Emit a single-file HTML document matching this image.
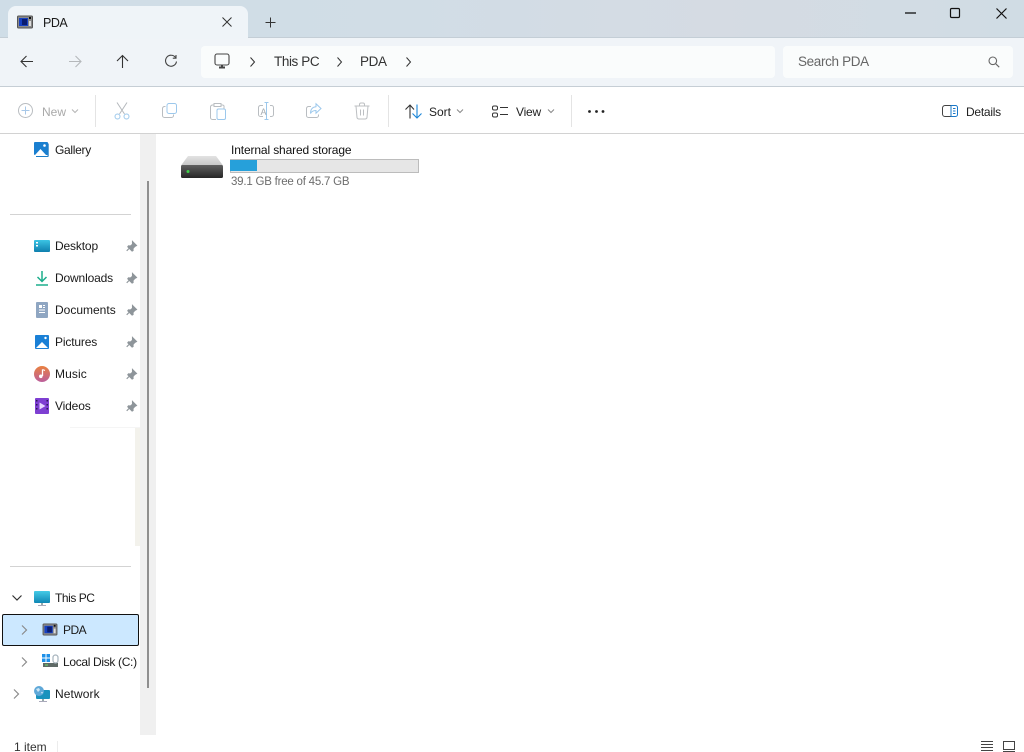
<!DOCTYPE html>
<html><head><meta charset="utf-8"><style>
html,body{margin:0;padding:0;width:1024px;height:752px;overflow:hidden;background:#fff}
body{position:relative;font-family:"Liberation Sans",sans-serif;font-size:12px;color:#1a1a1a}
.a{position:absolute}
.t{position:absolute;white-space:nowrap;line-height:16px}
.n{letter-spacing:-.15px}
.ad{font-size:13.5px;letter-spacing:-.4px;color:#333}
svg{position:absolute;overflow:visible}
</style></head><body>
<div class="a" style="left:0;top:0;width:1024px;height:38px;background:linear-gradient(90deg,#cfdde7 0%,#d1dde6 40%,#d5dbe3 70%,#d0dce4 100%)"></div>
<div class="a" style="left:0;top:38px;width:1024px;height:48px;background:#f0f4f8"></div>
<div class="a" style="left:0;top:37px;width:1024px;height:1px;background:#c4ced6"></div>
<div class="a" style="left:0;top:86px;width:1024px;height:1px;background:#c6ced5"></div>
<div class="a" style="left:8px;top:6px;width:240px;height:33px;background:#eff4f8;border-radius:8px 8px 0 0"></div>
<div class="a" style="left:201px;top:46px;width:574px;height:32px;background:#fafcfc;border-radius:4px"></div>
<div class="a" style="left:783px;top:46px;width:230px;height:32px;background:#fafcfc;border-radius:4px"></div>
<div class="a" style="left:0;top:133px;width:1024px;height:1px;background:#d2d2d2"></div>
<div class="a" style="left:140px;top:134px;width:16px;height:601px;background:#f0f0f0"></div>
<div class="a" style="left:135px;top:428px;width:5px;height:118px;background:#f3f2ec"></div>
<div class="a" style="left:70px;top:427px;width:70px;height:1px;background:#f5f5f5"></div>
<div class="a" style="left:147px;top:181px;width:2px;height:507px;background:#8f8f8f"></div>
<div class="a" style="left:10px;top:214px;width:121px;height:1px;background:#d3d3d3"></div>
<div class="a" style="left:10px;top:566px;width:121px;height:1px;background:#d3d3d3"></div>
<div class="a" style="left:2px;top:614px;width:135px;height:30px;background:#cce8ff;border:1.5px solid #111;border-radius:2px"></div>
<div class="a" style="left:57px;top:741px;width:1px;height:11px;background:#ececec"></div>

<!-- tab -->
<svg style="left:17px;top:15px" width="16" height="14" viewBox="0 0 16 14"><rect x=".5" y="1" width="15" height="12" rx="1" fill="#8b8b8b" stroke="#555"/><rect x="2" y="3" width="9" height="8" fill="#1740c0"/><rect x="5" y="4" width="5" height="6" fill="#0a1c70"/><rect x="12" y="2" width="2" height="2" fill="#111"/><rect x="12" y="6" width="2" height="5" fill="#ddd"/></svg>
<div class="t" style="left:43px;top:15px;font-size:12.5px;letter-spacing:-.5px">PDA</div>
<svg style="left:221px;top:16px" width="12" height="12" fill="none" stroke="#333"><path d="M1.500 1.500l9 9M10.500 1.500l-9 9"/></svg>
<svg style="left:265px;top:17px" width="11" height="11" fill="none" stroke="#333"><path d="M5.500 .5v10M.5 5.500h10"/></svg>
<!-- window -->
<svg style="left:905px;top:12px" width="12" height="3" fill="none" stroke="#111" stroke-width="1.300"><path d="M0 1h11"/></svg>
<svg style="left:950px;top:8px" width="11" height="11" fill="none" stroke="#111" stroke-width="1.200"><rect x=".5" y=".5" width="9" height="9" rx="1.200"/></svg>
<svg style="left:995.500px;top:8px" width="12" height="12" fill="none" stroke="#111" stroke-width="1.200"><path d="M.5 .5l10 10M10.500 .5l-10 10"/></svg>
<!-- nav -->
<svg style="left:20px;top:54px" width="14" height="14" fill="none" stroke="#333" stroke-width="1.100"><path d="M1 7.500h12M6.500 2l-5.500 5.500 5.500 5.500"/></svg>
<svg style="left:68px;top:54px" width="14" height="14" fill="none" stroke="#b5b8bb" stroke-width="1.100"><path d="M1 7.500h12M7.500 2l5.500 5.500-5.500 5.500"/></svg>
<svg style="left:116px;top:54px" width="14" height="14" fill="none" stroke="#333" stroke-width="1.100"><path d="M6.500 14V1.500M1 7l5.500-5.500L12 7"/></svg>
<svg style="left:164px;top:54px" width="14" height="14" fill="none" stroke="#444" stroke-width="1.100"><path d="M11.500 3.500A5.500 5.500 0 1 0 12.500 7.500M12 1v3.200H8.800"/></svg>
<svg style="left:214px;top:53px" width="18" height="17" fill="none" stroke="#444" stroke-width="1.100"><rect x="1" y="1" width="14" height="11" rx="2"/><path d="M5 14.500h6M8 12v2" stroke-width="2"/></svg>
<svg style="left:249px;top:57px" width="8" height="10" fill="none" stroke="#333"><path d="M1.500 .5l4 4.500-4 4.500"/></svg>
<div class="t ad" style="left:274px;top:54px">This PC</div>
<svg style="left:336px;top:57px" width="8" height="10" fill="none" stroke="#333"><path d="M1.500 .5l4 4.500-4 4.500"/></svg>
<div class="t ad" style="left:360px;top:54px">PDA</div>
<svg style="left:405px;top:57px" width="8" height="10" fill="none" stroke="#333"><path d="M1.500 .5l4 4.500-4 4.500"/></svg>
<div class="t" style="left:798px;top:54px;font-size:13.5px;letter-spacing:-.35px;color:#666">Search PDA</div>
<svg style="left:988px;top:56px" width="12" height="12" fill="none" stroke="#666" stroke-width="1.100"><circle cx="4.800" cy="4.800" r="3.800"/><path d="M7.800 7.800l3.400 3.400"/></svg>
<!-- toolbar -->
<svg style="left:18px;top:103px" width="16" height="16" fill="none" stroke="#b9bdc1"><circle cx="7.500" cy="7.500" r="7"/><path d="M7.500 3.500v8M3.500 7.500h8" stroke="#a8c8e8"/></svg>
<div class="t" style="left:42px;top:104px;color:#a9a9a9">New</div>
<svg style="left:71px;top:109px" width="8" height="5" fill="none" stroke="#b5b5b5"><path d="M1 .5l3 3 3-3"/></svg>
<div class="a" style="left:95px;top:95px;width:1px;height:32px;background:#e4e4e4"></div>
<svg style="left:114px;top:102px" width="16" height="18" fill="none" stroke="#b4b8bc"><path d="M3 .5l7.500 11.500M13 .5L5.500 12"/><circle cx="3.500" cy="14.500" r="2.500" stroke="#9cc8ec"/><circle cx="12.500" cy="14.500" r="2.500" stroke="#9cc8ec"/></svg>
<svg style="left:162px;top:103px" width="16" height="16" fill="none"><path d="M3.500 3.500h-1a2 2 0 0 0-2 2v7a2 2 0 0 0 2 2h7a2 2 0 0 0 2-2v-1" stroke="#b9bdc1"/><rect x="5" y=".5" width="9.500" height="10" rx="2" stroke="#9cc8ec"/></svg>
<svg style="left:210px;top:102px" width="17" height="18" fill="none"><path d="M4 3H2.500a2 2 0 0 0-2 2v10.500a2 2 0 0 0 2 2H6M11 3h1.500a1.500 1.500 0 0 1 1.500 2v1.500M4 1.500h7v3H4z" stroke="#b9bdc1"/><rect x="7" y="7" width="8.500" height="10.500" rx="1.500" stroke="#9cc8ec"/></svg>
<svg style="left:258px;top:102px" width="16" height="18" fill="none"><path d="M5 3.500H2.500a2 2 0 0 0-2 2v7a2 2 0 0 0 2 2H5M12 3.500h1.500a2 2 0 0 1 2 2v7a2 2 0 0 1-2 2H12" stroke="#b9bdc1"/><path d="M8.500 .5v17M6.500 .5h4M6.500 17.500h4" stroke="#9cc8ec"/><text x="2.500" y="13" font-family="Liberation Sans,sans-serif" font-size="9" fill="#a5abb0">A</text></svg>
<svg style="left:306px;top:103px" width="16" height="16" fill="none"><path d="M5 3.500H2.500a2 2 0 0 0-2 2v7a2 2 0 0 0 2 2h8a2 2 0 0 0 2-2v-1" stroke="#b9bdc1"/><path d="M10 .8l5 4.700-5 4.700V7.500c-3 0-4.500 1-5.500 3 0-4 2-6.500 5.500-6.800z" stroke="#9cc8ec"/></svg>
<svg style="left:354px;top:102px" width="16" height="18" fill="none" stroke="#bcbfc2"><path d="M.5 4h15M5.500 4V2.500a1.500 1.500 0 0 1 1.500-1.500h2a1.500 1.500 0 0 1 1.500 1.500V4M2 4l1 11.500a2 2 0 0 0 2 1.500h6a2 2 0 0 0 2-1.500L14 4M6.500 7.500v6M9.500 7.500v6"/></svg>
<div class="a" style="left:388px;top:95px;width:1px;height:32px;background:#e4e4e4"></div>
<svg style="left:405px;top:104px" width="17" height="15" fill="none" stroke-width="1.100"><path d="M5 14.500V1M.5 5.500L5 1l4 4.500" stroke="#333"/><path d="M12 .5V14M7.500 9.500L12 14l4.500-4.500" stroke="#1a86d8"/></svg>
<div class="t" style="left:429px;top:104px;color:#222">Sort</div>
<svg style="left:456px;top:109px" width="8" height="5" fill="none" stroke="#888"><path d="M1 .5l3 3 3-3"/></svg>
<svg style="left:492px;top:105px" width="18" height="13" fill="none" stroke="#333"><rect x=".5" y="1" width="5" height="4" rx="1.500"/><rect x=".5" y="8" width="5" height="4" rx="1.500"/><path d="M8 2.500h8M8 9.500h8"/></svg>
<div class="t" style="left:516px;top:104px;color:#222;letter-spacing:-.2px">View</div>
<svg style="left:547px;top:109px" width="8" height="5" fill="none" stroke="#888"><path d="M1 .5l3 3 3-3"/></svg>
<div class="a" style="left:571px;top:95px;width:1px;height:32px;background:#e4e4e4"></div>
<svg style="left:588px;top:110px" width="17" height="3" fill="#222"><circle cx="1.500" cy="1.500" r="1.400"/><circle cx="8.500" cy="1.500" r="1.400"/><circle cx="15" cy="1.500" r="1.400"/></svg>
<svg style="left:942px;top:105px" width="17" height="13" fill="none"><path d="M9 .5H3a2.500 2.500 0 0 0-2.500 2.500v6A2.500 2.500 0 0 0 3 11.500h6z" stroke="#444"/><path d="M9 .5h4.500a2 2 0 0 1 2 2v7a2 2 0 0 1-2 2H9zM11 3.500h2.500M11 6h2.500M11 8.500h2.500" stroke="#1a78c8"/></svg>
<div class="t" style="left:966px;top:104px;color:#222;letter-spacing:-.25px">Details</div>

<!-- sidebar -->
<svg style="left:34px;top:142px" width="16" height="16"><rect width="14" height="13" rx="1" fill="#1a7fd0"/><path d="M14.700 1.500v12.500a1 1 0 0 1-1 1H2v-1h11.500V1.500z" fill="#1c7cc6"/><path d="M1 13l5.500-6 5.500 6z" fill="#fff"/><circle cx="10.500" cy="3.500" r="1.300" fill="#fff"/></svg>
<div class="t" style="left:55px;top:142px;letter-spacing:-.3px">Gallery</div>
<svg style="left:34px;top:240px" width="16" height="12"><rect width="16" height="12" rx="1" fill="url(#dk)"/><defs><linearGradient id="dk" x1="0" y1="0" x2="0" y2="1"><stop offset="0" stop-color="#3cc4e4"/><stop offset="1" stop-color="#0e7fae"/></linearGradient></defs><rect x="2" y="2" width="2" height="1.500" fill="#fff"/><rect x="2" y="5" width="2" height="1.500" fill="#fff"/></svg>
<div class="t n" style="left:55px;top:238px">Desktop</div>
<svg style="left:36px;top:271px" width="12" height="15" fill="none" stroke="#1cae8c" stroke-width="1.500"><path d="M6 0v10M1.500 6L6 10.500 10.500 6"/><path d="M0 14h12"/></svg>
<div class="t n" style="left:55px;top:270px">Downloads</div>
<svg style="left:36px;top:302px" width="12" height="16"><rect width="12" height="16" rx="1" fill="#8fa6c2"/><path d="M3 3h3v3H3zM7 3h2v1H7zM7 5h2v1H7zM3 7.500h6v1H3zM3 10h6v1H3z" fill="#fff"/></svg>
<div class="t" style="left:55px;top:302px">Documents</div>
<svg style="left:35px;top:335px" width="14" height="14"><rect width="14" height="14" rx="1" fill="#1a80d6"/><path d="M1 13l6-6 6 6z" fill="#fff"/><circle cx="10.500" cy="3" r="1.200" fill="#fff"/></svg>
<div class="t n" style="left:55px;top:334px">Pictures</div>
<svg style="left:34px;top:366px" width="16" height="16"><defs><linearGradient id="mu" x1="0" y1="0" x2="0" y2="1"><stop offset="0" stop-color="#e9803f"/><stop offset="1" stop-color="#bb5f9c"/></linearGradient></defs><circle cx="8" cy="8" r="8" fill="url(#mu)"/><path d="M8.500 3.500v6.500" stroke="#fff" stroke-width="1.300"/><circle cx="6.800" cy="10.300" r="1.800" fill="#fff"/><path d="M8.500 3.500l2.500 1" stroke="#fff"/></svg>
<div class="t" style="left:55px;top:366px;letter-spacing:.1px">Music</div>
<svg style="left:35px;top:398px" width="14" height="16"><rect width="14" height="16" rx="1" fill="#7e3fd2"/><path d="M4.500 4.500l6 3.500-6 3.500z" fill="#e6d6ff"/><path d="M1 2h1.500v1.500H1zM1 6h1.500v1.500H1zM1 10h1.500v1.500H1zM11.500 2H13v1.500h-1.500zM11.500 6H13v1.500h-1.500zM11.500 10H13v1.500h-1.500z" fill="#2c1a55"/></svg>
<div class="t n" style="left:55px;top:398px">Videos</div>
<svg style="display:none"><defs><path id="pin" d="M6.500 .5l4 4-1.800 1-1.800 2.100.2 1.900-1 .6-4.300-4.300 .7-1 1.900.3 2.100-1.800zM3 7.500L.7 9.800"/></defs></svg>
<svg style="left:125.500px;top:241px" width="11" height="11" fill="#8e959a" stroke="#8e959a" stroke-width="1.100"><use href="#pin"/></svg>
<svg style="left:125.500px;top:273px" width="11" height="11" fill="#8e959a" stroke="#8e959a" stroke-width="1.100"><use href="#pin"/></svg>
<svg style="left:125.500px;top:305px" width="11" height="11" fill="#8e959a" stroke="#8e959a" stroke-width="1.100"><use href="#pin"/></svg>
<svg style="left:125.500px;top:337px" width="11" height="11" fill="#8e959a" stroke="#8e959a" stroke-width="1.100"><use href="#pin"/></svg>
<svg style="left:125.500px;top:369px" width="11" height="11" fill="#8e959a" stroke="#8e959a" stroke-width="1.100"><use href="#pin"/></svg>
<svg style="left:125.500px;top:401px" width="11" height="11" fill="#8e959a" stroke="#8e959a" stroke-width="1.100"><use href="#pin"/></svg>

<svg style="left:12px;top:595px" width="10" height="6" fill="none" stroke="#333" stroke-width="1.200"><path d="M.5 .5l4.500 4.500 4.500-4.500"/></svg>
<svg style="left:34px;top:591px" width="16" height="15"><defs><linearGradient id="pc" x1="0" y1="0" x2="0" y2="1"><stop offset="0" stop-color="#45cbe6"/><stop offset="1" stop-color="#0f87b5"/></linearGradient></defs><rect width="16" height="12" rx="1" fill="url(#pc)"/><rect x="7" y="12" width="2" height="2" fill="#9aa"/><rect x="4" y="14" width="8" height="1" fill="#aab"/></svg>
<div class="t" style="left:55px;top:590px;letter-spacing:-.45px">This PC</div>
<svg style="left:21px;top:625px" width="7" height="10" fill="none" stroke="#8a8a8a" stroke-width="1.200"><path d="M1 .5l4.500 4.500L1 9.500"/></svg>
<svg style="left:42px;top:623px" width="16" height="13" viewBox="0 0 16 14"><rect x=".5" y="1" width="15" height="12" rx="1" fill="#8b8b8b" stroke="#555"/><rect x="2" y="3" width="9" height="8" fill="#1740c0"/><rect x="5" y="4" width="5" height="6" fill="#0a1c70"/><rect x="12" y="2" width="2" height="2" fill="#111"/><rect x="12" y="6" width="2" height="5" fill="#ddd"/></svg>
<div class="t" style="left:63px;top:622px;letter-spacing:-.5px">PDA</div>
<svg style="left:21px;top:657px" width="7" height="10" fill="none" stroke="#8a8a8a" stroke-width="1.200"><path d="M1 .5l4.500 4.500L1 9.500"/></svg>
<svg style="left:42px;top:654px" width="17" height="14"><path d="M0 0h3.500v3.500H0zM4.500 0H8v3.500H4.500zM0 4.500h3.500V8H0zM4.500 4.500H8V8H4.500z" fill="#1e90e8"/><rect x="1" y="9" width="15" height="4" fill="#5f6a66"/><rect x="3" y="10.500" width="3" height="1" fill="#6fe06f"/><rect x="11" y="1" width="5" height="8" rx="2.500" fill="none" stroke="#a7b4bd" stroke-width="1.200"/></svg>
<div class="t" style="left:63px;top:654px;letter-spacing:-.33px">Local Disk (C:)</div>
<svg style="left:13px;top:689px" width="7" height="10" fill="none" stroke="#8a8a8a" stroke-width="1.200"><path d="M1 .5l4.500 4.500L1 9.500"/></svg>
<svg style="left:34px;top:686px" width="16" height="16"><rect x="2" y="4" width="14" height="9" rx="1" fill="#1a92bd"/><rect x="8" y="13" width="2" height="2" fill="#9aa"/><rect x="5" y="15" width="8" height="1" fill="#aab"/><circle cx="5" cy="5" r="5" fill="#5fa8d8"/><path d="M2 3l3-1 1 2-2 2zM7 6l2 0-1 2z" fill="#cde6f5"/></svg>
<div class="t" style="left:55px;top:686px;letter-spacing:.1px">Network</div>

<!-- main -->
<svg style="left:181px;top:155px" width="42" height="24"><defs><linearGradient id="hd" x1="0" y1="0" x2="0" y2="1"><stop offset="0" stop-color="#606060"/><stop offset="1" stop-color="#262626"/></linearGradient><linearGradient id="hdt" x1="0" y1="0" x2="0" y2="1"><stop offset="0" stop-color="#e2e2e2"/><stop offset="1" stop-color="#c6c6c6"/></linearGradient></defs><path d="M7 1h28l7 9.500H0z" fill="url(#hdt)"/><rect y="10" width="42" height="13" rx="1.500" fill="url(#hd)"/><circle cx="7" cy="16.500" r="1.500" fill="#3fd04a"/></svg>
<div class="t" style="left:231px;top:142px;color:#111;letter-spacing:-.13px">Internal shared storage</div>
<div class="a" style="left:230px;top:159px;width:187px;height:12px;background:#e6e6e6;border:1px solid #bcbcbc"></div>
<div class="a" style="left:230px;top:160px;width:27px;height:11px;background:#26a0da"></div>
<div class="t" style="left:231px;top:174px;color:#6d6d6d;font-size:11.5px;letter-spacing:-.22px">39.1 GB free of 45.7 GB</div>
<div class="t" style="left:14px;top:739px;color:#333">1 item</div>
<svg style="left:981px;top:741px" width="13" height="11" fill="none" stroke="#444"><path d="M0 .5h12M0 3.500h12M0 6.500h12M0 9.500h12"/></svg>
<svg style="left:1003px;top:741px" width="13" height="11" fill="none" stroke="#444"><rect x=".5" y=".5" width="11" height="8"/><path d="M0 10.500h12"/></svg>
</body></html>
